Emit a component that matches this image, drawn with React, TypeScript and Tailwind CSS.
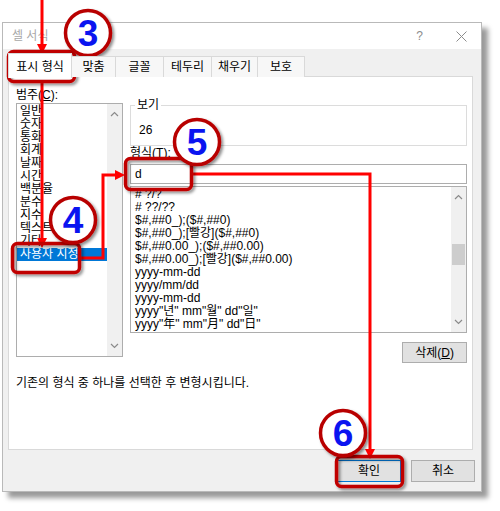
import React from "react";

const F = "font-['Liberation_Sans','Noto_Sans_CJK_KR',sans-serif]";

const categories = ["일반", "숫자", "통화", "회계", "날짜", "시간", "백분율", "분수", "지수", "텍스트", "기타", "사용자 지정"];
const formats = [
  "# ?/?",
  "# ??/??",
  "$#,##0_);($#,##0)",
  "$#,##0_);[빨강]($#,##0)",
  "$#,##0.00_);($#,##0.00)",
  "$#,##0.00_);[빨강]($#,##0.00)",
  "yyyy-mm-dd",
  "yyyy/mm/dd",
  "yyyy-mm-dd",
  'yyyy"년" mm"월" dd"일"',
  'yyyy"年" mm"月" dd"日"',
];
const tabs: [string, string][] = [
  ["표시 형식", "w-[64px]"],
  ["맞춤", "w-[44px]"],
  ["글꼴", "w-[48px]"],
  ["테두리", "w-[48px]"],
  ["채우기", "w-[46px]"],
  ["보호", "w-[47px]"],
];

function Chevron({ up }: { up?: boolean }) {
  return (
    <svg width="9" height="6" viewBox="0 0 9 6" className="block">
      <path d={up ? "M1 5 L4.5 1.5 L8 5" : "M1 1 L4.5 4.5 L8 1"} fill="none" stroke="#8a8a8a" strokeWidth="1.2" />
    </svg>
  );
}

function Circle({ cx, cy, n }: { cx: number; cy: number; n: string }) {
  return (
    <g>
      <circle cx={cx} cy={cy} r={22.5} fill="#fff" stroke="#b80000" strokeWidth={3.5} filter="url(#sh)" />
      <text x={cx} y={cy + 13} textAnchor="middle" fontFamily="'Liberation Sans', Arial, sans-serif" fontWeight="bold" fontSize="37" fill="#0a14f0">
        {n}
      </text>
    </g>
  );
}

export default function App() {
  return (
    <div className={`relative w-[500px] h-[511px] bg-white overflow-hidden ${F} text-[12px] text-black`}>
      <div className="pt-[22px] pl-[2px]">
        <div className="w-[480px] h-[470px] border border-[#b9b9b9] bg-[#f0f0f0] shadow-[6px_6px_5px_rgba(0,0,0,0.4)] flex flex-col">
          {/* title bar */}
          <div className="h-[26px] bg-white flex items-center">
            <span className="ml-[9px] text-[#a8a8a8] leading-[14px]">셀 서식</span>
            <span className="ml-auto text-[#8c8c8c] text-[12px] leading-[14px]">?</span>
            <svg width="11" height="11" viewBox="0 0 11 11" className="ml-[33px] mr-[14px]">
              <path d="M0.5 0.5 L10.5 10.5 M10.5 0.5 L0.5 10.5" stroke="#8c8c8c" strokeWidth="1" />
            </svg>
          </div>
          {/* tabs */}
          <div className="h-[28px] flex items-end pl-[5px] relative z-10">
            {tabs.map(([t, w], i) => (
              <div
                key={t}
                className={
                  i === 0
                    ? `${w} h-[25px] bg-white border border-b-0 border-[#d9d9d9] flex items-center justify-center leading-[14px] -mb-px pb-[2px] pt-[4px]`
                    : `${w} h-[21px] bg-[#f7f7f7] border-t border-r border-[#d9d9d9] flex items-center justify-center leading-[14px]`
                }
              >
                {t}
              </div>
            ))}
          </div>
          {/* panel */}
          <div className="ml-[5px] w-[465px] h-[374px] -mt-px bg-white border border-[#d9d9d9] flex flex-col">
            <div className="flex items-start pt-[10px] pl-[7px]">
              <div className="w-[107px] flex flex-col">
                <div className="h-[16px] leading-[16px]">범주(<span className="underline">C</span>):</div>
                <div className="h-[254px] border border-[#adadad] flex">
                  <div className="flex-1 pt-[1px] flex flex-col">
                    {categories.map((c, i) => (
                      <div
                        key={c}
                        className={`h-[13px] leading-[13px] pl-[3px] whitespace-nowrap ${i === 11 ? "bg-[#0078d7] text-white" : ""}`}
                      >
                        {c}
                      </div>
                    ))}
                  </div>
                  <div className="w-[15px] bg-[#f0f0f0] flex flex-col items-center justify-between py-[7px]">
                    <Chevron up />
                    <Chevron />
                  </div>
                </div>
              </div>
              <div className="w-[337px] ml-[7px] flex flex-col">
                <div className="mt-[18px] h-[41px] border border-[#dcdcdc] relative pl-[8px] pt-[17px] leading-[14px]">
                  <span className="absolute -top-[8px] left-[4px] bg-white px-[2px] leading-[14px]">보기</span>
                  26
                </div>
                <div className="h-[14px] leading-[14px] mb-[4px]">형식(<span className="underline">T</span>):</div>
                <div className="h-[20px] border border-[#adadad] pl-[4px] flex items-center leading-[14px]">d</div>
                <div className="mt-[2px] h-[147px] border border-[#adadad] flex overflow-hidden">
                  <div className="flex-1 pt-[1px] pl-[4px] flex flex-col overflow-hidden">
                    {formats.map((f, i) => (
                      <div key={i} className="h-[13px] leading-[13px] whitespace-nowrap shrink-0">
                        {f}
                      </div>
                    ))}
                  </div>
                  <div className="w-[15px] bg-[#f0f0f0] flex flex-col items-center py-[7px]">
                    <Chevron up />
                    <div className="mt-[44px] w-[13px] h-[21px] bg-[#cdcdcd]" />
                    <div className="mt-auto">
                      <Chevron />
                    </div>
                  </div>
                </div>
                <div className="flex justify-end mt-[9px]">
                  <div className="w-[65px] h-[21px] bg-[#e1e1e1] border border-[#adadad] flex items-center justify-center leading-[14px]">
                    삭제(<span className="underline">D</span>)
                  </div>
                </div>
              </div>
            </div>
            <div className="mt-[12px] pl-[7px] h-[16px] leading-[16px]">기존의 형식 중 하나를 선택한 후 변형시킵니다.</div>
          </div>
          {/* buttons */}
          <div className="mt-[10px] flex justify-end pr-[6px] gap-[10px]">
            <div className="w-[64px] h-[22px] bg-[#e1e1e1] border border-[#0078d7] flex items-center justify-center leading-[14px]">확인</div>
            <div className="w-[64px] h-[22px] bg-[#e1e1e1] border border-[#adadad] flex items-center justify-center leading-[14px]">취소</div>
          </div>
        </div>
      </div>

      {/* annotations overlay */}
      <svg className="absolute left-0 top-0 pointer-events-none" width="500" height="511" viewBox="0 0 500 511">
        <defs>
          <filter id="sh" x="-30%" y="-30%" width="160%" height="160%">
            <feDropShadow dx="2" dy="2" stdDeviation="1.5" floodColor="#000" floodOpacity="0.45" />
          </filter>
        </defs>
        <g stroke="#ff0000" strokeWidth="3" fill="none">
          <path d="M42 0 L42 46" />
          <path d="M42 83 L42 240" />
          <path d="M80 258 L103 258 L103 175 L117 175" />
          <path d="M192 174 L370 174 L370 451" />
        </g>
        <g fill="#ff0000">
          <path d="M37 44 L47 44 L42 54 Z" />
          <path d="M37 238 L47 238 L42 248 Z" />
          <path d="M115 170 L115 180 L125 175 Z" />
          <path d="M365 449 L375 449 L370 459 Z" />
        </g>
        <g fill="none" stroke="#c00000" strokeWidth="3.5" filter="url(#sh)">
          <rect x="8.5" y="51.5" width="66" height="30" rx="5" />
          <rect x="12.5" y="243.5" width="67" height="29" rx="5" />
          <rect x="125.5" y="158.5" width="66" height="31" rx="5" />
          <rect x="336.5" y="456.5" width="66" height="30" rx="5" />
        </g>
        <Circle cx={88} cy={33} n="3" />
        <Circle cx={73} cy={220} n="4" />
        <Circle cx={197} cy={142} n="5" />
        <Circle cx={343} cy={433} n="6" />
      </svg>
    </div>
  );
}
